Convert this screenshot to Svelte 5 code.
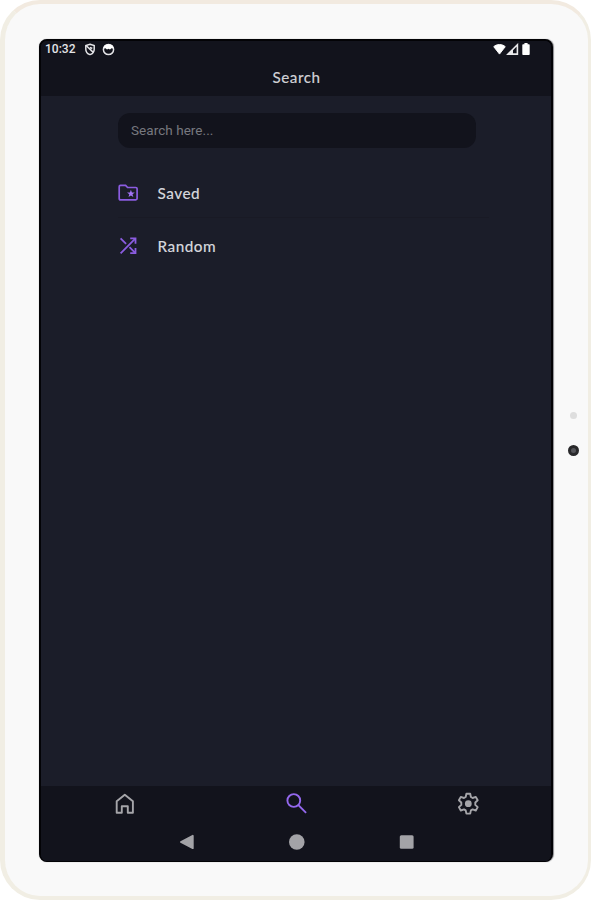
<script lang="ts">
  type Item = { id: string; label: string }

  const items: Item[] = [
    { id: 'saved', label: 'Saved' },
    { id: 'random', label: 'Random' }
  ]

  let query = $state('')
</script>

<div class="device">
  <div class="screen">
    <header>
      <div class="status">
        <span class="clock">10:32</span>
        <svg class="shield" width="12" height="13" viewBox="0 0 12 13" fill="none" stroke="#e4e4e7" stroke-width="1.5">
          <path d="M6 1.2 10.2 2.6V6.2C10.2 8.8 8.5 10.8 6 11.6 3.5 10.8 1.8 8.8 1.8 6.2V2.6Z" />
          <path d="M2.3 2.8 9.3 9.4M6 4.3 8.3 5.5" />
        </svg>
        <svg class="face" width="13" height="13" viewBox="0 0 13 13">
          <circle cx="6.5" cy="6.5" r="5.1" fill="none" stroke="#e4e4e7" stroke-width="1.5" />
          <path d="M1.4 5.5A5.2 5.2 0 0 1 11.6 5.5L9.5 5.2 8 6.5 6.5 5.8 5 6.5 3.5 5.2Z" fill="#fff" />
        </svg>
        <div class="signals">
          <svg width="13" height="12" viewBox="0 0 14 12">
            <path d="M.8 3.5C4 .4 10 .4 13.2 3.5L7 11.5Z" fill="#fff" stroke="#fff" stroke-linejoin="round" />
          </svg>
          <svg width="13" height="12" viewBox="0 0 13 12">
            <path d="M2 11.1H11.4V1.8Z" fill="none" stroke="#e9e9eb" stroke-width="1.6" />
            <path d="M1 11.5H7V6Z" fill="#e9e9eb" />
          </svg>
          <svg class="battery" width="8" height="12" viewBox="0 0 8 12">
            <path d="M2.4 0H5.6V1.2H7Q7.7 1.2 7.7 2.2V11Q7.7 12 7 12H1Q.3 12 .3 11V2.2Q.3 1.2 1 1.2H2.4Z" fill="#fff" />
          </svg>
        </div>
      </div>
      <h1>Search</h1>
    </header>

    <main>
      <input type="text" placeholder="Search here..." bind:value={query} />
      <ul>
        {#each items as item (item.id)}
          <li>
            {#if item.id === 'saved'}
              <svg width="22" height="22" viewBox="0 0 22 22">
                <path
                  d="M2.4 3.4H7.6L9.6 5.5H17.8Q19.1 5.5 19.1 6.8V16.6Q19.1 17.9 17.8 17.9H2.5Q1.2 17.9 1.2 16.6V4.7Q1.2 3.4 2.4 3.4Z"
                  fill="none"
                  stroke="#8b5ce0"
                  stroke-width="1.7"
                />
                <path
                  d="M12.9 7.7 13.9 10.4 16.8 10.5 14.5 12.3 15.3 15.1 12.9 13.5 10.5 15.1 11.3 12.3 9 10.5 11.9 10.4Z"
                  fill="#a273f5"
                />
              </svg>
            {:else}
              <svg width="22" height="22" viewBox="0 0 22 22" fill="none" stroke="#8b5ce0" stroke-width="1.8">
                <path d="M2.6 18.3 17 3.9M2.6 3.3 8.1 8.8M11.5 12.2 17.2 17.9" />
                <path d="M12.2 3.4H17.5V8.7M12.2 18.2H17.5V12.9" />
              </svg>
            {/if}
            <span>{item.label}</span>
          </li>
        {/each}
      </ul>
    </main>

    <footer>
      <nav class="tabs">
        <button type="button" aria-label="Home">
          <svg width="24" height="24" viewBox="0 0 24 24" fill="none" stroke="#a5a5a9" stroke-width="1.9" stroke-linejoin="round">
            <path d="M2.7 9.2 10.8 2.7 18.9 9.2V20.8H13.8V14.2H7.8V20.8H2.7Z" />
          </svg>
        </button>
        <button type="button" aria-label="Search">
          <svg width="24" height="24" viewBox="0 0 24 24" fill="none" stroke="#9468ee" stroke-width="1.9">
            <circle cx="8.8" cy="8.5" r="6.4" />
            <path d="M13.4 13.2 21.1 20.9" />
          </svg>
        </button>
        <button type="button" aria-label="Settings">
          <svg width="24" height="24" viewBox="0 0 24 24" fill="none" stroke="#a5a5a9" stroke-width="1.9" stroke-linejoin="round">
            <path
              d="M10.4 1.8H14.2L14.9 5 16.6 6 19.8 4.9 21.7 8.3 19.3 10.5V12.9L21.7 15.1 19.8 18.5 16.6 17.4 14.9 18.4 14.2 21.6H10.4L9.7 18.4 8 17.4 4.8 18.5 2.9 15.1 5.3 12.9V10.5L2.9 8.3 4.8 4.9 8 6 9.7 5Z"
            />
            <circle cx="12.3" cy="11.7" r="3.4" fill="#a5a5a9" stroke="none" />
          </svg>
        </button>
      </nav>
      <div class="system">
        <svg width="18" height="18" viewBox="0 0 18 18">
          <path d="M2.9 9 14.8 2.8V15.2Z" fill="#a3a3a7" stroke="#a3a3a7" stroke-width="1.8" stroke-linejoin="round" />
        </svg>
        <svg width="18" height="18" viewBox="0 0 18 18"><circle cx="8.8" cy="9" r="7.8" fill="#a3a3a7" /></svg>
        <svg width="18" height="18" viewBox="0 0 18 18">
          <rect x="1.8" y="2.2" width="13.8" height="13.6" rx="1.5" fill="#a3a3a7" />
        </svg>
      </div>
    </footer>
  </div>
  <aside>
    <span class="sensor"></span>
    <span class="camera"></span>
  </aside>
</div>

<style>
  :global(body) {
    background: #ffffff;
    font-family: Roboto, 'Liberation Sans', sans-serif;
  }

  .device {
    display: flex;
    box-sizing: border-box;
    width: 591px;
    height: 900px;
    padding: 35px 0 34px 34px;
    border: 4px solid #f1eee4;
    border-left-width: 5px;
    border-right-width: 3px;
    border-top-color: #f2eae0;
    border-radius: 40px;
    background: #f9f9f9;
  }

  .screen {
    display: flex;
    flex-direction: column;
    box-sizing: border-box;
    width: 514px;
    height: 823px;
    border: 2px solid #030306;
    border-bottom-width: 1px;
    border-radius: 8px;
    overflow: hidden;
    background: #1b1d29;
    box-shadow: 0.5px 0 1px #8a8a8e;
  }

  header {
    height: 55px;
    background: #12131c;
  }

  .status {
    display: flex;
    align-items: center;
    height: 16px;
    padding: 0 21px 0 4px;
  }

  .clock {
    width: 32px;
    color: #e4e4e7;
    font-size: 12px;
    font-weight: 500;
    white-space: nowrap;
  }

  .shield {
    margin-left: 7px;
  }

  .face {
    margin-left: 6px;
  }

  .signals {
    display: flex;
    align-items: center;
    margin-left: auto;
  }

  .battery {
    margin-left: 3px;
  }

  h1 {
    margin: 0;
    padding-left: 1px;
    color: #cfcfd4;
    font-family: Lato, sans-serif;
    font-size: 15.2px;
    font-weight: 500;
    line-height: 41px;
    letter-spacing: 0.5px;
    text-align: center;
    -webkit-text-stroke: 0.1px #cfcfd4;
  }

  main {
    flex: 1;
    padding: 17px 62px 0 77px;
  }

  input {
    display: block;
    box-sizing: border-box;
    width: 358px;
    height: 35px;
    padding: 0 13px 1px;
    border: 0;
    border-radius: 12px;
    outline: none;
    background: #12131c;
    color: #cfcfd4;
    font: 13.5px Roboto, sans-serif;
    letter-spacing: 0.05px;
  }

  input::placeholder {
    color: #77787f;
    opacity: 1;
  }

  ul {
    margin: 21px 0 0;
    padding: 0;
    list-style: none;
  }

  li {
    display: flex;
    align-items: center;
    gap: 17.5px;
    box-sizing: border-box;
    height: 48px;
    color: #d5d6dc;
    font-family: Lato, sans-serif;
    font-size: 15.3px;
    font-weight: 500;
    letter-spacing: 0.5px;
    -webkit-text-stroke: 0.1px #d5d6dc;
  }

  li + li {
    height: 56px;
    border-top: 1px solid #191a25;
  }

  footer {
    height: 75px;
    background: #12131c;
  }

  .tabs {
    display: grid;
    grid-template-columns: 170px 172px 170px;
    height: 36px;
  }

  button {
    display: flex;
    align-items: center;
    justify-content: center;
    padding: 0;
    border: 0;
    background: none;
  }

  .system {
    display: flex;
    align-items: center;
    justify-content: center;
    gap: 92px;
    height: 40px;
    padding-left: 1px;
  }

  aside {
    display: flex;
    flex: 1;
    flex-direction: column;
    align-items: center;
    padding: 373px 0 0 6px;
  }

  .sensor {
    width: 7px;
    height: 7px;
    border-radius: 50%;
    background: #dedede;
  }

  .camera {
    box-sizing: border-box;
    width: 11px;
    height: 11px;
    margin-top: 26px;
    border: 3px solid #29292b;
    border-radius: 50%;
    background: #55565b;
  }
</style>
